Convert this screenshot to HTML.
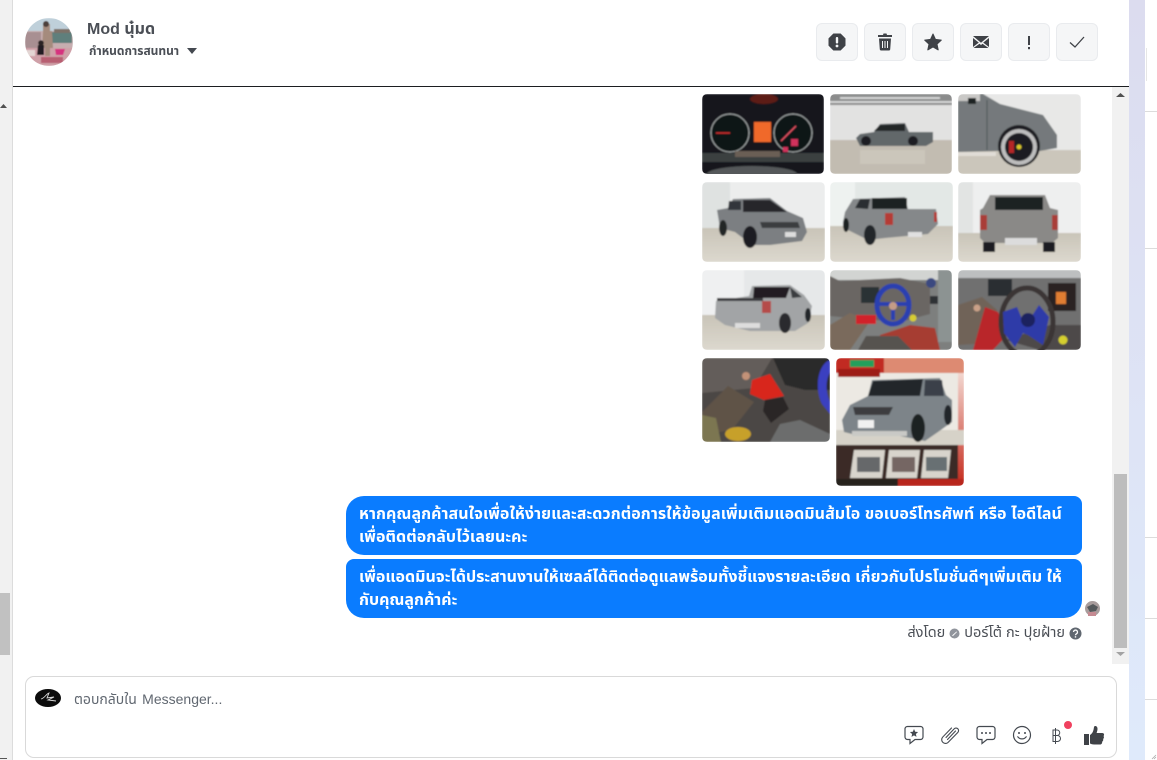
<!DOCTYPE html>
<html lang="th"><head><meta charset="utf-8"><title>Inbox</title>
<style>
*{box-sizing:border-box}
html,body{margin:0;padding:0;width:1157px;height:760px;overflow:hidden;background:#fff;font-family:"Liberation Sans","Noto Sans Thai","Noto Sans CJK SC",sans-serif;color:#444950}
.a{position:absolute}
.btn{position:absolute;top:23px;width:42px;height:38px;background:#f5f6f7;border:1px solid #e9ebee;border-radius:6px}
.btn svg{position:absolute;left:8px;top:6px}
.bub{position:absolute;left:346px;width:736px;height:59px;background:#0a7cff;color:#fff;font-size:16px;font-weight:700;line-height:23px;padding:7px 13px;white-space:nowrap}
.ln{position:absolute;left:1145px;width:12px;height:1px;background:#dcdcdc}
</style></head><body>
<div class="a" style="left:0;top:0;width:12px;height:760px;background:#f1f1f1"></div>
<div class="a" style="left:0;top:593px;width:10px;height:62px;background:#c1c1c1"></div>
<div class="a" style="left:12px;top:0;width:1px;height:760px;background:#dcdcdc"></div>
<svg class="a" style="left:0;top:103px" width="8" height="6"><path d="M0 5 L3.500 1 L7 5Z" fill="#505050"/></svg>
<div class="a" style="left:0;top:758px;width:7px;height:1px;background:#555"></div>

<div class="a" style="left:13px;top:86px;width:1116px;height:1px;background:#1c1e21"></div>

<div class="a" style="left:1112px;top:87px;width:17px;height:577px;background:#f1f1f1"></div>
<div class="a" style="left:1114px;top:474px;width:13px;height:174px;background:#bdbdbd"></div>
<svg class="a" style="left:1116px;top:92px" width="9" height="6"><path d="M0 5 L4.500 1 L9 5Z" fill="#505050"/></svg>
<svg class="a" style="left:1116px;top:651px" width="9" height="6"><path d="M0 1 L4.500 5 L9 1Z" fill="#a3a3a3"/></svg>

<div class="a" style="left:1129px;top:0;width:16px;height:760px;background:linear-gradient(#dcdcef,#dfeafb)"></div>
<div class="ln" style="top:111px"></div><div class="ln" style="top:248px"></div><div class="ln" style="top:537px"></div><div class="ln" style="top:618px"></div><div class="ln" style="top:699px"></div>
<div class="a" style="left:1146px;top:48px;width:1px;height:33px;background:#e6e6e6"></div>

<svg class="a" style="left:25px;top:18px" width="48" height="48" viewBox="0 0 48 48">
<defs><clipPath id="av"><circle cx="24" cy="24" r="24"/></clipPath><filter id="b1"><feGaussianBlur stdDeviation=".5"/></filter></defs>
<g clip-path="url(#av)"><g filter="url(#b1)">
<rect width="48" height="48" fill="#c7aeb0"/><rect width="48" height="13" fill="#bfd0da"/>
<path d="M0 14h16v16H0z" fill="#a88f92"/><path d="M0 30h48v18H0z" fill="#cfa0a8"/>
<path d="M27 14h20v11H27z" fill="#5f7f7c"/><path d="M29 11h16v4H29z" fill="#7d7168"/>
<path d="M18 6h7v7h2l1 17h-3v8h-5v-8h-3l1-17h0z" fill="#a58b7d"/><circle cx="21" cy="6" r="3" fill="#4d3f3a"/>
<path d="M13 27h6v10h-7z" fill="#231f22"/><circle cx="16" cy="25" r="2.800" fill="#2a2423"/>
<path d="M30 31h10l-2 6h-7z" fill="#d6307f"/>
<path d="M16 39h22v6H16z" fill="#b85f72"/><path d="M0 32h10v6H0z" fill="#e3d6d4"/>
</g></g></svg>
<div class="a" style="left:87px;top:21px;font-size:16px;font-weight:700;color:#4b4f56;line-height:18px;white-space:nowrap">Mod นุ๋มด</div>
<div class="a" style="left:89px;top:44px;font-size:12px;font-weight:700;color:#4b4f56;line-height:15px;white-space:nowrap">กำหนดการสนทนา</div>
<svg class="a" style="left:186px;top:47px" width="12" height="8"><path d="M1 1H11L6 7Z" fill="#444950"/></svg>

<div class="btn" style="left:816px"><svg width="24" height="24" viewBox="0 0 24 24"><path d="M8.600 4h6.800L20 8.600v6.800L15.400 20H8.600L4 15.400V8.600Z" fill="#3f4247" stroke="#3f4247" stroke-width="1" stroke-linejoin="round"/><rect x="10.800" y="7" width="2.400" height="6.500" rx="1" fill="#f5f6f7"/><circle cx="12" cy="16" r="1.400" fill="#f5f6f7"/></svg></div>
<div class="btn" style="left:864px"><svg width="24" height="24" viewBox="0 0 24 24"><path d="M10 5 10.500 3.500h3L14 5h5V7H5V5Z" fill="#3f4247"/><path d="M6 8.500h12l-.8 11a1.300 1.300 0 0 1-1.300 1H8.100a1.300 1.300 0 0 1-1.300-1Z" fill="#3f4247"/><path d="M9.500 11v7M12 11v7M14.500 11v7" stroke="#f5f6f7" stroke-width="1"/></svg></div>
<div class="btn" style="left:912px"><svg width="24" height="24" viewBox="0 0 24 24"><path d="M12 4l2.500 5.400 5.800.7-4.300 4 1.200 5.800-5.200-2.900-5.200 2.900 1.200-5.800-4.300-4 5.800-.7Z" fill="#3f4247" stroke="#3f4247" stroke-linejoin="round"/></svg></div>
<div class="btn" style="left:960px"><svg width="24" height="24" viewBox="0 0 24 24"><path d="M4 6h16L12 12.700Z M4 8l5.800 4.600L4 17Z M20 8l-5.800 4.600L20 17Z M4.500 18l6-4.200 1.500 1.200 1.500-1.200 6 4.200Z" fill="#3f4247"/></svg></div>
<div class="btn" style="left:1008px"><svg width="24" height="24" viewBox="0 0 24 24"><rect x="11" y="6" width="2" height="9" fill="#3f4247"/><rect x="11" y="17" width="2" height="2.200" fill="#3f4247"/></svg></div>
<div class="btn" style="left:1056px"><svg width="24" height="24" viewBox="0 0 24 24"><path d="M5 12.500 10 17l9-10" fill="none" stroke="#3f4247" stroke-width="1.300"/></svg></div>

<svg class="a" style="left:0;top:0" width="1157" height="760" viewBox="0 0 1157 760">
<defs>
<filter id="s" x="-5%" y="-5%" width="110%" height="110%"><feGaussianBlur stdDeviation=".8"/></filter>
<linearGradient id="fl" x1="0" y1="0" x2="0" y2="1"><stop offset="0" stop-color="#c9c4b8"/><stop offset="1" stop-color="#dcd8ce"/></linearGradient>
<linearGradient id="rd" x1="0" y1="0" x2="0" y2="1"><stop offset="0" stop-color="#f3d9d2"/><stop offset="1" stop-color="#c4281a"/></linearGradient>
<clipPath id="c1"><rect x="702" y="94" width="122" height="80" rx="5"/></clipPath>
<clipPath id="c2"><rect x="830" y="94" width="122" height="80" rx="5"/></clipPath>
<clipPath id="c3"><rect x="958" y="94" width="123" height="80" rx="5"/></clipPath>
<clipPath id="c4"><rect x="702" y="182" width="123" height="80" rx="5"/></clipPath>
<clipPath id="c5"><rect x="830" y="182" width="123" height="80" rx="5"/></clipPath>
<clipPath id="c6"><rect x="958" y="182" width="123" height="80" rx="5"/></clipPath>
<clipPath id="c7"><rect x="702" y="270" width="123" height="80" rx="5"/></clipPath>
<clipPath id="c8"><rect x="830" y="270" width="122" height="80" rx="5"/></clipPath>
<clipPath id="c9"><rect x="958" y="270" width="123" height="80" rx="5"/></clipPath>
<clipPath id="c10"><rect x="702" y="358" width="128" height="84" rx="5"/></clipPath>
<clipPath id="c11"><rect x="836" y="358" width="128" height="128" rx="5"/></clipPath>
</defs>
<g clip-path="url(#c1)"><g filter="url(#s)">
<rect x="702" y="94" width="122" height="80" fill="#15181a"/>
<ellipse cx="764" cy="99" rx="14" ry="5" fill="#5d1a14"/>
<circle cx="730" cy="133" r="19" fill="#101417" stroke="#aab0b0" stroke-width="1"/>
<circle cx="793" cy="133" r="19" fill="#101417" stroke="#aab0b0" stroke-width="1"/>
<rect x="754" y="122" width="17" height="20" fill="#f0692c"/>
<path d="M716 133h14" stroke="#d33" stroke-width="1.300"/><path d="M781 141l15-15" stroke="#e56" stroke-width="1.300"/>
<rect x="791" y="139" width="7" height="7" fill="#d0305c"/><rect x="783" y="147" width="5" height="5" fill="#d0305c"/>
<rect x="702" y="153" width="122" height="9" fill="#3a4040"/>
<rect x="735" y="151" width="45" height="6" fill="#6a5f55"/>
<ellipse cx="752" cy="174" rx="45" ry="8" fill="#54585a"/>
</g></g>
<g clip-path="url(#c2)"><g filter="url(#s)">
<rect x="830" y="94" width="122" height="80" fill="#e2e2e1"/>
<rect x="830" y="94" width="122" height="11" fill="#8b8c8c"/><path d="M840 98h100M830 102h122" stroke="#e9e9e9" stroke-width="1.500"/>
<rect x="830" y="140" width="122" height="34" fill="#c2bcb1"/>
<path d="M856 138 860 134 874 132 880 124 905 123 909 132 933 132 933 142 926 146H860Z" fill="#62676a"/>
<path d="M880 125 905 124 905 131H874Z" fill="#232628"/>
<circle cx="866" cy="141" r="5" fill="#1d1e20"/><circle cx="913" cy="141" r="5" fill="#1d1e20"/>
<rect x="860" y="150" width="65" height="14" fill="#cbc6bb"/>
</g></g>
<g clip-path="url(#c3)"><g filter="url(#s)">
<rect x="958" y="94" width="123" height="80" fill="#e8e8e7"/><rect x="958" y="150" width="123" height="24" fill="#cbc6bb"/>
<path d="M958 94H983L1000 104 1043 115 1057 135 1057 148 1040 151 996 151 958 152Z" fill="#74797c"/>
<rect x="958" y="94" width="22" height="7" fill="#c9c8c6"/><rect x="968" y="98" width="8" height="6" fill="#1f2022"/>
<path d="M987 100v50" stroke="#4c5154" stroke-width="1"/>
<rect x="958" y="152" width="38" height="4" fill="#e1ddd6"/>
<circle cx="1019" cy="146" r="21" fill="#1e1f21"/><circle cx="1019" cy="147" r="18" fill="#bdbdbd"/><circle cx="1019" cy="147" r="14" fill="#1d1e22"/>
<circle cx="1019" cy="147" r="2.500" fill="#d9c62b"/><rect x="1009" y="141" width="5" height="12" fill="#b52828"/>
</g></g>
<g clip-path="url(#c4)"><g filter="url(#s)">
<rect x="702" y="182" width="123" height="80" fill="#eceded"/><rect x="702" y="182" width="28" height="46" fill="#dfe2e1"/>
<rect x="702" y="228" width="123" height="34" fill="url(#fl)"/>
<path d="M717 210 728 208 733 199 770 198 787 211 803 218 807 232 802 241 770 245 752 245 735 232 720 228Z" fill="#7b7f82"/>
<path d="M743 200h27l17 12h-44Z" fill="#26282b"/><path d="M729 201h12v9h-13Z" fill="#33363a"/>
<path d="M760 222h38l2 6h-38Z" fill="#3a3c3f"/><rect x="785" y="232" width="11" height="5" fill="#ddd"/>
<ellipse cx="750" cy="237" rx="7" ry="11" fill="#1d1e20"/><ellipse cx="723" cy="228" rx="4" ry="8" fill="#242527"/>
</g></g>
<g clip-path="url(#c5)"><g filter="url(#s)">
<rect x="830" y="182" width="123" height="80" fill="#e3e8e6"/><rect x="830" y="182" width="25" height="46" fill="#eef2f0"/>
<rect x="830" y="226" width="123" height="36" fill="url(#fl)"/>
<path d="M843 222 845 212 853 199 905 197 908 209 936 209 938 224 928 234 885 238 868 240 848 230Z" fill="#85888a"/>
<path d="M872 198h35v11h-35Z" fill="#1e2022"/><path d="M855 208 860 199 870 199 868 209Z" fill="#2c2f31"/>
<rect x="885" y="213" width="8" height="12" fill="#b53a36"/><rect x="934" y="212" width="3" height="10" fill="#b53a36"/>
<rect x="908" y="232" width="14" height="5" fill="#e0e0e0"/>
<ellipse cx="870" cy="235" rx="6" ry="10" fill="#23252a"/><ellipse cx="846" cy="225" rx="3" ry="7" fill="#1f2022"/>
</g></g>
<g clip-path="url(#c6)"><g filter="url(#s)">
<rect x="958" y="182" width="123" height="80" fill="#eeefef"/><rect x="958" y="182" width="15" height="52" fill="#e2e4e3"/>
<rect x="958" y="233" width="123" height="29" fill="url(#fl)"/>
<path d="M983 208 990 195 1045 195 1050 208 1058 210 1058 238 1052 243H985L980 238 980 210Z" fill="#8a8987"/>
<rect x="995" y="197" width="48" height="13" fill="#1e2022"/>
<rect x="980" y="215" width="7" height="15" fill="#a93c38"/><rect x="1052" y="215" width="6" height="15" fill="#a93c38"/>
<rect x="1005" y="238" width="32" height="7" fill="#dcdcdc"/>
<rect x="983" y="242" width="12" height="10" fill="#1e1e20"/><rect x="1043" y="242" width="12" height="10" fill="#1e1e20"/>
</g></g>
<g clip-path="url(#c7)"><g filter="url(#s)">
<rect x="702" y="270" width="123" height="80" fill="#e6e8e9"/><rect x="702" y="270" width="42" height="45" fill="#eff0f1"/>
<rect x="702" y="315" width="123" height="35" fill="url(#fl)"/>
<path d="M716 301 749 296 752 286 790 285 804 295 812 306 808 323 795 331H750L725 325 715 318Z" fill="#a2a4a6"/>
<path d="M754 287h36l-4 11h-33Z" fill="#201f20"/><path d="M717 298h46v3h-46Z" fill="#3a3b3d"/>
<path d="M790 287l12 10-10 1Z" fill="#3a3c3f"/>
<rect x="762" y="301" width="9" height="12" fill="#b54b48"/>
<ellipse cx="785" cy="323" rx="6" ry="10" fill="#2b2c2e"/><ellipse cx="808" cy="315" rx="3" ry="7" fill="#24262a"/>
<rect x="735" y="323" width="25" height="5" fill="#ddd"/>
</g></g>
<g clip-path="url(#c8)"><g filter="url(#s)">
<rect x="830" y="270" width="122" height="80" fill="#7d7f7e"/><rect x="830" y="270" width="122" height="10" fill="#d2d4d2"/>
<path d="M830 276l10 5 60-3 30 6 0 30-30 8-50-4-20-2Z" fill="#6a6664"/>
<rect x="861" y="287" width="18" height="16" fill="#2c3136"/>
<path d="M830 325l20-12 20 8-20 29h-20Z" fill="#7a6a5b"/>
<path d="M880 335l30-10 25 3 5 22h-60Z" fill="#a63c33"/>
<path d="M858 350l8-14 32 0 14 14Z" fill="#565250"/>
<ellipse cx="893" cy="305" rx="16" ry="19" fill="none" stroke="#2b40b0" stroke-width="5"/><path d="M879 304h28M893 306v14" stroke="#2b40b0" stroke-width="4"/><circle cx="893" cy="306" r="4" fill="#c49c86"/>
<rect x="856" y="315" width="20" height="9" fill="#d1242a"/><circle cx="913" cy="318" r="3.500" fill="#d7cd33"/>
<rect x="930" y="296" width="15" height="8" fill="#2d3034"/><rect x="938" y="270" width="14" height="72" fill="#8c9392"/>
<circle cx="931" cy="283" r="5" fill="#3a4a80"/>
</g></g>
<g clip-path="url(#c9)"><g filter="url(#s)">
<rect x="958" y="270" width="123" height="80" fill="#6f6f6f"/><rect x="958" y="270" width="123" height="8" fill="#bdbfc0"/>
<path d="M958 305l24-8 15 13-6 33-33 2Z" fill="#6f6458"/><path d="M985 307l13 5 10 22-15 16h-20Z" fill="#b9272a"/>
<rect x="988" y="279" width="24" height="17" fill="#2b2e32"/><rect x="1048" y="283" width="28" height="28" fill="#2a2422"/><rect x="1056" y="292" width="10" height="12" fill="#e07d30"/>
<path d="M1006 340 1040 350H1081V325H1050Z" fill="#4e4a48"/>
<ellipse cx="1027" cy="322" rx="26" ry="34" fill="none" stroke="#3a3534" stroke-width="5"/>
<path d="M1003 312l14-5 5 12 8 0 9-14 10 12-6 28-15-10-5-2-8 14-11-14Z" fill="#2e3ba8"/><circle cx="1028" cy="320" r="7" fill="#1c225e"/>
<circle cx="1063" cy="340" r="4.500" fill="#d5cf2d"/><circle cx="977" cy="308" r="3.500" fill="#caa188"/>
</g></g>
<g clip-path="url(#c10)"><g filter="url(#s)">
<rect x="702" y="358" width="128" height="84" fill="#4b4744"/>
<path d="M702 358h70l-18 30-52 5Z" fill="#635d5a"/><path d="M773 358h57v32h-25l-20-5Z" fill="#2b2a2b"/>
<path d="M702 412l26-26 26 16-22 28-30 5Z" fill="#5e5247"/>
<path d="M752 380l18-6 14 22-20 4-14-6Z" fill="#d8281e"/><path d="M765 400l18-3 6 12-18 14-8-12Z" fill="#2a2627"/>
<path d="M770 442l10-18 20-4 30 14v8Z" fill="#6c6d6d"/>
<path d="M702 415l14 3 5 24H702Z" fill="#7b7651"/><ellipse cx="738" cy="434" rx="13" ry="7" fill="#c7a02c"/>
<path d="M830 360c-12 4-16 28-8 44l8 10v-12c-5-12-4-22 0-30Z" fill="#3b3fc0"/>
<circle cx="746" cy="376" r="4" fill="#c39278"/>
</g></g>
<g clip-path="url(#c11)"><g filter="url(#s)">
<rect x="836" y="358" width="128" height="128" fill="#ece9e3"/>
<rect x="958" y="372" width="6" height="114" fill="url(#rd)"/>
<rect x="836" y="358" width="128" height="15" fill="#c12b20"/><rect x="884" y="358" width="80" height="15" fill="#dd8a72"/>
<rect x="850" y="360" width="24" height="7" fill="#22a05c"/><rect x="838" y="369" width="42" height="8" fill="#9d1e18"/>
<rect x="836" y="430" width="128" height="15" fill="#d6d2c8"/>
<path d="M842 420 850 405 868 396 872 380 940 378 946 395 952 400 952 422 938 432 925 441 900 436 860 436 844 432Z" fill="#7d8489"/>
<path d="M873 381 923 379 920 396 868 396Z" fill="#23262b"/><path d="M925 380 942 380 944 396 924 396Z" fill="#3b4148"/>
<path d="M853 407h40l-4 8h-34Z" fill="#3c3e41"/>
<rect x="858" y="420" width="16" height="8" fill="#f1f1f1"/>
<rect x="852" y="431" width="55" height="5" fill="#c9c9c6"/>
<ellipse cx="918" cy="428" rx="7" ry="14" fill="#1f2022"/><ellipse cx="948" cy="415" rx="4" ry="10" fill="#24262a"/>
<rect x="836" y="445" width="122" height="34" fill="#3a2a27"/>
<path d="M854 450H885L882 478H850Z M889 450H920L917 478H886Z M924 450H951L948 478H921Z" fill="#d8d4cc"/>
<rect x="857" y="457" width="23" height="15" fill="#66686a"/><rect x="892" y="457" width="23" height="15" fill="#746664"/><rect x="926" y="457" width="21" height="14" fill="#686f73"/>
<rect x="836" y="479" width="128" height="7" fill="#b8271a"/><rect x="836" y="479" width="62" height="7" fill="#27211f"/>
</g></g>
</svg>

<div class="bub" style="top:496px;border-radius:18px 8px 8px 18px;letter-spacing:.05px">หากคุณลูกค้าสนใจเพื่อให้ง่ายและสะดวกต่อการให้ข้อมูลเพิ่มเติมแอดมินส้มโอ ขอเบอร์โทรศัพท์ หรือ ไอดีไลน์<br>เพื่อติดต่อกลับไว้เลยนะคะ</div>
<div class="bub" style="top:559px;border-radius:8px 8px 18px 18px;letter-spacing:-.01px">เพื่อแอดมินจะได้ประสานงานให้เซลล์ได้ติดต่อดูแลพร้อมทั้งชี้แจงรายละเอียด เกี่ยวกับโปรโมชั่นดีๆเพิ่มเติม ให้<br>กับคุณลูกค้าค่ะ</div>
<svg class="a" style="left:1085px;top:601px" width="15" height="15" viewBox="0 0 15 15"><circle cx="7.500" cy="7.500" r="7.500" fill="#a89c9c"/><path d="M2 6l6-3 5 3-2 4-6 1Z" fill="#55595c"/><path d="M3 11h8v4H3Z" fill="#c58a92"/></svg>

<div class="a" style="right:75px;top:624px;font-size:14.500px;line-height:18px;color:#4b4f56;white-space:nowrap;display:flex;align-items:center;gap:3px">ส่งโดย <svg width="11" height="11" viewBox="0 0 11 11" style="margin:0 1px"><circle cx="5.500" cy="5.500" r="5" fill="#90949c"/><path d="M3 7.500 7.500 3.500 8 4 4 8Z" fill="#fff"/></svg> ปอร์โต้ กะ ปุยฝ้าย <svg width="13" height="13" viewBox="0 0 13 13" style="margin-left:1px"><circle cx="6.500" cy="6.500" r="6" fill="#606770"/><path d="M4.500 5a2 2 0 1 1 3 1.800c-.7.4-1 .7-1 1.400" fill="none" stroke="#fff" stroke-width="1.300"/><rect x="5.800" y="9.200" width="1.400" height="1.400" fill="#fff"/></svg></div>

<div class="a" style="left:25px;top:676px;width:1092px;height:82px;border:1px solid #d9d9d9;border-radius:9px;background:#fff"></div>
<svg class="a" style="left:35px;top:689px" width="26" height="18" viewBox="0 0 26 18"><ellipse cx="13" cy="9" rx="13" ry="9" fill="#0c0c0c"/><path d="M6 10c4-1 5-5 8-6l-2 5 7-1-6 3 8 1" fill="none" stroke="#dcdcdc" stroke-width=".9"/></svg>
<div class="a" style="left:74px;top:690px;font-size:14px;line-height:18px;color:#606770;white-space:nowrap;word-spacing:1.500px">ตอบกลับใน Messenger...</div>

<svg class="a" style="left:903px;top:724px" width="22" height="22" viewBox="0 0 22 22"><path d="M4.500 2.500h13a2.500 2.500 0 0 1 2.500 2.500v8a2.500 2.500 0 0 1-2.500 2.500H12l-5 4v-4H4.500A2.500 2.500 0 0 1 2 13V5a2.500 2.500 0 0 1 2.500-2.500Z" fill="none" stroke="#444950" stroke-width="1.200"/><path d="M11 5l1.200 2.700 2.900.3-2.200 2 .6 2.900-2.500-1.500-2.500 1.500.6-2.900-2.200-2 2.900-.3Z" fill="#444950"/></svg>
<svg class="a" style="left:939px;top:724px" width="22" height="22" viewBox="0 0 22 22"><path d="M7 13.500 15 5a2.500 2.500 0 0 1 4 3.200L9 18.500a3.800 3.800 0 0 1-5.500-5.200L12.500 4M8.500 15.500l8-8.500" fill="none" stroke="#444950" stroke-width="1.100" stroke-linecap="round"/></svg>
<svg class="a" style="left:975px;top:724px" width="22" height="22" viewBox="0 0 22 22"><path d="M4.500 2.500h13a2.500 2.500 0 0 1 2.500 2.500v8a2.500 2.500 0 0 1-2.500 2.500H12l-5 4v-4H4.500A2.500 2.500 0 0 1 2 13V5a2.500 2.500 0 0 1 2.500-2.500Z" fill="none" stroke="#444950" stroke-width="1.200"/><circle cx="7" cy="9" r="1" fill="#444950"/><circle cx="11" cy="9" r="1" fill="#444950"/><circle cx="15" cy="9" r="1" fill="#444950"/></svg>
<svg class="a" style="left:1011px;top:724px" width="22" height="22" viewBox="0 0 22 22"><circle cx="11" cy="11" r="8.500" fill="none" stroke="#444950" stroke-width="1.200"/><circle cx="8" cy="9" r="1" fill="#444950"/><circle cx="14" cy="9" r="1" fill="#444950"/><path d="M6.800 12.800c2 2.800 6.400 2.800 8.400 0" fill="none" stroke="#444950" stroke-width="1.200" stroke-linecap="round"/></svg>
<svg class="a" style="left:1050px;top:726px" width="14" height="20" viewBox="0 0 14 20"><path d="M3 4h4a2.700 2.700 0 0 1 0 5.500H3Zm0 5.500h4.500a3 3 0 0 1 0 6H3ZM3 4v11.500M5.500 2v16" fill="none" stroke="#444950" stroke-width="1"/></svg>
<div class="a" style="left:1064px;top:721px;width:8px;height:8px;border-radius:50%;background:#f0415f"></div>
<svg class="a" style="left:1083px;top:724px" width="22" height="22" viewBox="0 0 22 22"><rect x="1" y="10" width="5" height="11" fill="#3f4247"/><path d="M7 11c2.500-1.500 3.500-4 4-8 .2-1.500 3.300-1.500 3.500 1.500.1 1.600-.4 3-.9 4.500h5.600c2 0 2.400 2 1.300 3 .8 1 .5 2.300-.4 3 .5 1-.1 2.200-1 2.700.3 1.300-.6 2.800-2 2.800H11c-1.500 0-2.800-.5-4-1Z" fill="#3f4247"/></svg>
<svg class="a" style="left:1151px;top:753px" width="6" height="7"><path d="M1 6 5 2M3 6 5 4" stroke="#aaa" stroke-width=".8"/></svg>
</body></html>
